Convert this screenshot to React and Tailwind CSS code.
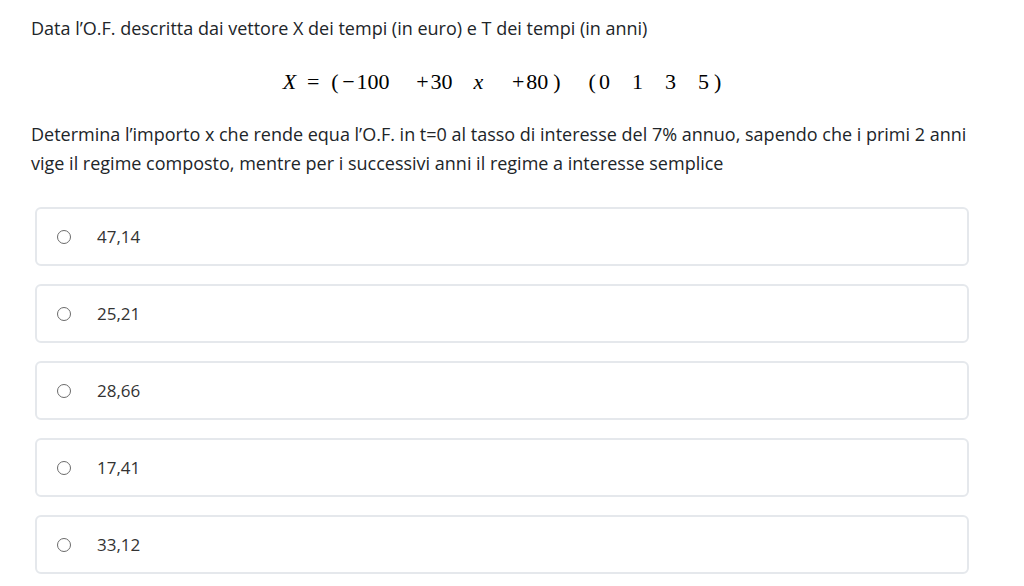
const options = ['47,14', '25,21', '28,66', '17,41', '33,12'];

export default function App() {
  return (
    <div className="min-h-screen bg-white pl-[31px] pr-[51px] pt-[15px] text-[#212529]" style={{ fontFamily: '"Open Sans", "Liberation Sans", sans-serif' }}>
      <p className="text-[18px] leading-[26px]">Data l’O.F. descritta dai vettore X dei tempi (in euro) e T dei tempi (in anni)</p>

      {/* formula */}
      <div className="mt-[26px] flex justify-center text-[22px] leading-[30px] text-black" style={{ fontFamily: '"Liberation Serif", "DejaVu Serif", serif' }}>
        <span className="italic">X</span>
        <span className="ml-[8px] inline-block w-[18px] text-center">=</span>
        <span className="ml-[9px]">(</span>
        <span className="ml-[3px] inline-block w-[14px] text-center">−</span>
        <span className="ml-[1px]">100</span>
        <span className="ml-[25px] inline-block w-[16px] text-center">+</span>
        <span>30</span>
        <span className="ml-[21px] italic">x</span>
        <span className="ml-[27px] inline-block w-[16px] text-center">+</span>
        <span>80</span>
        <span className="ml-[5px]">)</span>
        <span className="ml-[28px]">(</span>
        <span className="ml-[3px]">0</span>
        <span className="ml-[22px]">1</span>
        <span className="ml-[22px]">3</span>
        <span className="ml-[22px]">5</span>
        <span className="ml-[5px]">)</span>
      </div>

      <p className="mt-[23px] text-[18px] leading-[29px]">
        Determina l’importo x che rende equa l’O.F. in t=0 al tasso di interesse del 7% annuo, sapendo che i primi 2 anni vige il regime composto, mentre per i successivi anni il regime a interesse semplice
      </p>

      <div className="mt-[29px] flex flex-col gap-[18px] px-[4px]">
        {options.map((o) => (
          <label key={o} className="flex h-[59px] items-center rounded-[6px] border-2 border-[#e5e8ec] bg-white pl-[20px]">
            <span className="inline-block h-[14px] w-[14px] rounded-full border border-[#6b6b6b] bg-white" />
            <span className="ml-[26px] text-[17px] text-[#333]">{o}</span>
          </label>
        ))}
      </div>
    </div>
  );
}
